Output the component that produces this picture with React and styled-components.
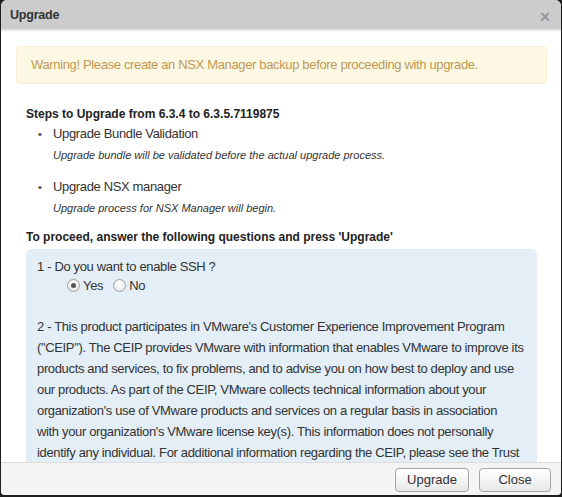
import React from "react";
import styled, { createGlobalStyle } from "styled-components";

const Global = createGlobalStyle`
  html, body {
    margin: 0;
    padding: 0;
    background: #1e1e1e;
    overflow: hidden;
  }
  body {
    font-family: "Liberation Sans", Arial, sans-serif;
  }
`;

const Page = styled.div`
  width: 562px;
  height: 497px;
  padding-left: 1px;
  box-sizing: border-box;
`;

const Dialog = styled.div`
  width: 560px;
  height: 495px;
  background: #fff;
  border-radius: 6px 6px 4px 4px;
  overflow: hidden;
  display: flex;
  flex-direction: column;
  color: #333;
  font-size: 13px;
  letter-spacing: -0.35px;
`;

const Header = styled.div`
  height: 29px;
  flex: none;
  background: #cccccc;
  border-bottom: 2px solid #e4e4e4;
  display: flex;
  align-items: center;
  justify-content: space-between;
  padding: 0 9px;
`;

const Title = styled.div`
  font-weight: bold;
  font-size: 12.5px;
  letter-spacing: -0.2px;
  color: #333;
  margin-top: 1px;
`;

const CloseX = styled.span`
  font-size: 18px;
  font-weight: bold;
  color: #9a9a9a;
  line-height: 1;
  margin-top: 5px;
  margin-right: 2px;
`;

const Body = styled.div`
  flex: 1;
  overflow: hidden;
  padding: 15px 14px 0 15px;
`;

const Warning = styled.div`
  background: #fcf8e3;
  border: 1px solid #fbeed5;
  border-radius: 4px;
  color: #c09853;
  font-size: 13px;
  line-height: 20px;
  padding: 8px 14px;
`;

const Content = styled.div`
  padding: 0 0 0 10px;
  margin-top: 20px;
`;

const Heading = styled.div`
  font-weight: bold;
  font-size: 12px;
  letter-spacing: 0;
  line-height: 20px;
  color: #222;
`;

const Steps = styled.ul`
  margin: 0 0 9px;
  padding: 0 0 0 12px;
  list-style: none;
`;

const Step = styled.li`
  display: grid;
  grid-template-columns: 15px 1fr;
  & + & {
    margin-top: 12px;
  }
`;

const Bullet = styled.span`
  font-size: 11px;
  line-height: 20px;
  color: #444;
`;

const StepBody = styled.div``;

const StepTitle = styled.div`
  font-size: 13px;
  line-height: 20px;
`;

const StepDesc = styled.div`
  font-size: 11px;
  font-style: italic;
  letter-spacing: 0;
  line-height: 20px;
  margin-top: 1px;
`;

const Questions = styled.div`
  margin-top: 2px;
  background: #e3eef6;
  border-radius: 5px 5px 0 0;
  padding: 8px 6px 20px 11px;
  width: 511px;
  box-sizing: border-box;
`;

const Question = styled.div`
  line-height: 20px;
`;

const RadioRow = styled.div`
  display: flex;
  align-items: center;
  padding-left: 30px;
  height: 17px;
  margin-bottom: 22px;
`;

const RadioLabel = styled.label`
  display: flex;
  align-items: center;
  gap: 3px;
  margin-right: 10px;
`;

const RadioCircle = styled.span`
  width: 11px;
  height: 11px;
  border-radius: 50%;
  border: 1px solid #a0a0a0;
  background: radial-gradient(circle at 50% 35%, #ffffff 0%, #e2e2e2 100%);
  display: flex;
  align-items: center;
  justify-content: center;
  box-sizing: content-box;

  &::after {
    content: "";
    width: 5px;
    height: 5px;
    border-radius: 50%;
    background: ${(p) => (p.$checked ? "#555" : "transparent")};
  }
`;

const Para = styled.p`
  margin: 0;
  line-height: 21px;
  white-space: nowrap;
`;

const Footer = styled.div`
  flex: none;
  height: 32px;
  background: #f4f4f4;
  border-top: 1px solid #dcdcdc;
  display: flex;
  align-items: center;
  justify-content: flex-end;
  gap: 10px;
  padding: 0 10px 0 0;
`;

const Button = styled.button`
  height: 24px;
  width: ${(p) => p.$w}px;
  font-family: "Liberation Sans", Arial, sans-serif;
  font-size: 13px;
  letter-spacing: 0;
  color: #333;
  background: linear-gradient(#ffffff, #e8e8e8);
  border: 1px solid #a5a5a5;
  border-radius: 4px;
  padding: 0;
  margin-top: 1px;
`;

const ceipLines = [
  "2 - This product participates in VMware's Customer Experience Improvement Program",
  '("CEIP"). The CEIP provides VMware with information that enables VMware to improve its',
  "products and services, to fix problems, and to advise you on how best to deploy and use",
  "our products. As part of the CEIP, VMware collects technical information about your",
  "organization's use of VMware products and services on a regular basis in association",
  "with your organization's VMware license key(s). This information does not personally",
  "identify any individual. For additional information regarding the CEIP, please see the Trust",
  "& Assurance Center.",
];

export default function App() {
  return (
    <>
      <Global />
      <Page>
        <Dialog>
          <Header>
            <Title>Upgrade</Title>
            <CloseX>×</CloseX>
          </Header>
          <Body>
            <Warning>
              Warning! Please create an NSX Manager backup before proceeding with upgrade.
            </Warning>
            <Content>
              <Heading>Steps to Upgrade from 6.3.4 to 6.3.5.7119875</Heading>
              <Steps>
                <Step>
                  <Bullet>•</Bullet>
                  <StepBody>
                    <StepTitle>Upgrade Bundle Validation</StepTitle>
                    <StepDesc>
                      Upgrade bundle will be validated before the actual upgrade process.
                    </StepDesc>
                  </StepBody>
                </Step>
                <Step>
                  <Bullet>•</Bullet>
                  <StepBody>
                    <StepTitle>Upgrade NSX manager</StepTitle>
                    <StepDesc>Upgrade process for NSX Manager will begin.</StepDesc>
                  </StepBody>
                </Step>
              </Steps>
              <Heading>
                To proceed, answer the following questions and press 'Upgrade'
              </Heading>
              <Questions>
                <Question>1 - Do you want to enable SSH ?</Question>
                <RadioRow>
                  <RadioLabel>
                    <RadioCircle $checked />
                    Yes
                  </RadioLabel>
                  <RadioLabel>
                    <RadioCircle />
                    No
                  </RadioLabel>
                </RadioRow>
                <Para>
                  {ceipLines.map((line, i) => (
                    <React.Fragment key={i}>
                      {line}
                      {i < ceipLines.length - 1 && <br />}
                    </React.Fragment>
                  ))}
                </Para>
              </Questions>
            </Content>
          </Body>
          <Footer>
            <Button $w={74}>Upgrade</Button>
            <Button $w={72}>Close</Button>
          </Footer>
        </Dialog>
      </Page>
    </>
  );
}
